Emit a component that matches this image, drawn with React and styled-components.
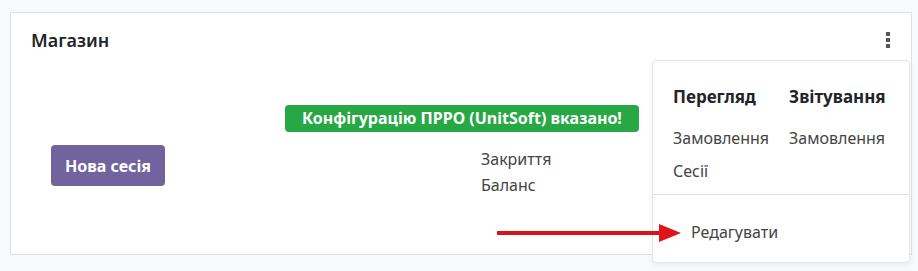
import React from "react";
import styled, { createGlobalStyle } from "styled-components";

const GlobalStyle = createGlobalStyle`
  body {
    margin: 0;
    background: #f8f9fa;
    font-family: "Noto Sans", "Open Sans", sans-serif;
    color: #212529;
  }
`;

const Page = styled.div`
  padding: 12px 6px 16px 10px;
  height: 271px;
  box-sizing: border-box;
`;

const Card = styled.div`
  position: relative;
  height: 243px;
  box-sizing: border-box;
  background: #fff;
  border: 1px solid #dee2e6;
`;

const Header = styled.div`
  display: flex;
  align-items: center;
  justify-content: space-between;
  padding: 15px 20px 0 20px;
  height: 24px;
`;

const Title = styled.h2`
  margin: 0;
  font-size: 18px;
  font-weight: 600;
  line-height: 24px;
  color: #212529;
`;

const Kebab = styled.div`
  display: flex;
  flex-direction: column;
  gap: 2px;
  margin-right: 1px;
  span {
    display: block;
    width: 4px;
    height: 4px;
    background: #555;
  }
`;

const Body = styled.div`
  display: flex;
  padding: 0 0 0 40px;
`;

const LeftCol = styled.div`
  width: 234px;
  padding-top: 93px;
`;

const PrimaryButton = styled.button`
  height: 41px;
  padding: 0 14px;
  border: none;
  border-radius: 4px;
  background: #71639e;
  color: #fff;
  font-family: inherit;
  font-size: 16px;
  font-weight: 700;
`;

const RightCol = styled.div`
  display: flex;
  flex-direction: column;
  align-items: flex-start;
  padding-top: 53px;
`;

const Badge = styled.div`
  height: 27px;
  line-height: 27px;
  padding: 0 17px;
  border-radius: 4px;
  background: #28a745;
  color: #fff;
  font-size: 16px;
  font-weight: 700;
`;

const Links = styled.div`
  margin: 14px 0 0 196px;
  display: flex;
  flex-direction: column;
`;

const Link = styled.a`
  font-size: 16px;
  line-height: 26px;
  color: #444;
  text-decoration: none;
`;

const Menu = styled.div`
  position: absolute;
  left: 641px;
  top: 47px;
  width: 258px;
  height: 203px;
  box-sizing: border-box;
  background: #fff;
  border: 1px solid #e3e5e8;
  border-radius: 4px;
  box-shadow: 0 2px 6px rgba(0, 0, 0, 0.06);
  padding-top: 24px;
`;

const MenuColumns = styled.div`
  display: flex;
  gap: 20px;
  padding: 0 20px 6px 20px;
`;

const MenuColumn = styled.div`
  display: flex;
  flex-direction: column;
`;

const MenuHeading = styled.div`
  font-size: 17px;
  font-weight: 700;
  line-height: 24px;
  color: #212529;
  margin-bottom: 13px;
`;

const MenuItem = styled.div`
  font-size: 16px;
  line-height: 33px;
  color: #444;
  padding-left: ${(p) => p.$indent || 0}px;
`;

const Divider = styled.div`
  border-top: 1px solid #dee2e6;
  padding-top: 21px;
`;

const Arrow = styled.svg`
  position: absolute;
  left: 486px;
  top: 208px;
  z-index: 2;
`;

export default function App() {
  return (
    <>
      <GlobalStyle />
      <Page>
        <Card>
          <Header>
            <Title>Магазин</Title>
            <Kebab>
              <span />
              <span />
              <span />
            </Kebab>
          </Header>
          <Body>
            <LeftCol>
              <PrimaryButton>Нова сесія</PrimaryButton>
            </LeftCol>
            <RightCol>
              <Badge>Конфігурацію ПРРО (UnitSoft) вказано!</Badge>
              <Links>
                <Link href="#">Закриття</Link>
                <Link href="#">Баланс</Link>
              </Links>
            </RightCol>
          </Body>
          <Menu>
            <MenuColumns>
              <MenuColumn>
                <MenuHeading>Перегляд</MenuHeading>
                <MenuItem>Замовлення</MenuItem>
                <MenuItem>Сесії</MenuItem>
              </MenuColumn>
              <MenuColumn>
                <MenuHeading>Звітування</MenuHeading>
                <MenuItem>Замовлення</MenuItem>
              </MenuColumn>
            </MenuColumns>
            <Divider>
              <MenuItem $indent={38}>Редагувати</MenuItem>
            </Divider>
          </Menu>
          <Arrow width="200" height="26" viewBox="0 0 200 26">
            <line x1="0" y1="12" x2="166" y2="12" stroke="#d7141a" strokeWidth="4" />
            <polygon points="162,3 184,12 162,21" fill="#e0141a" />
          </Arrow>
        </Card>
      </Page>
    </>
  );
}
